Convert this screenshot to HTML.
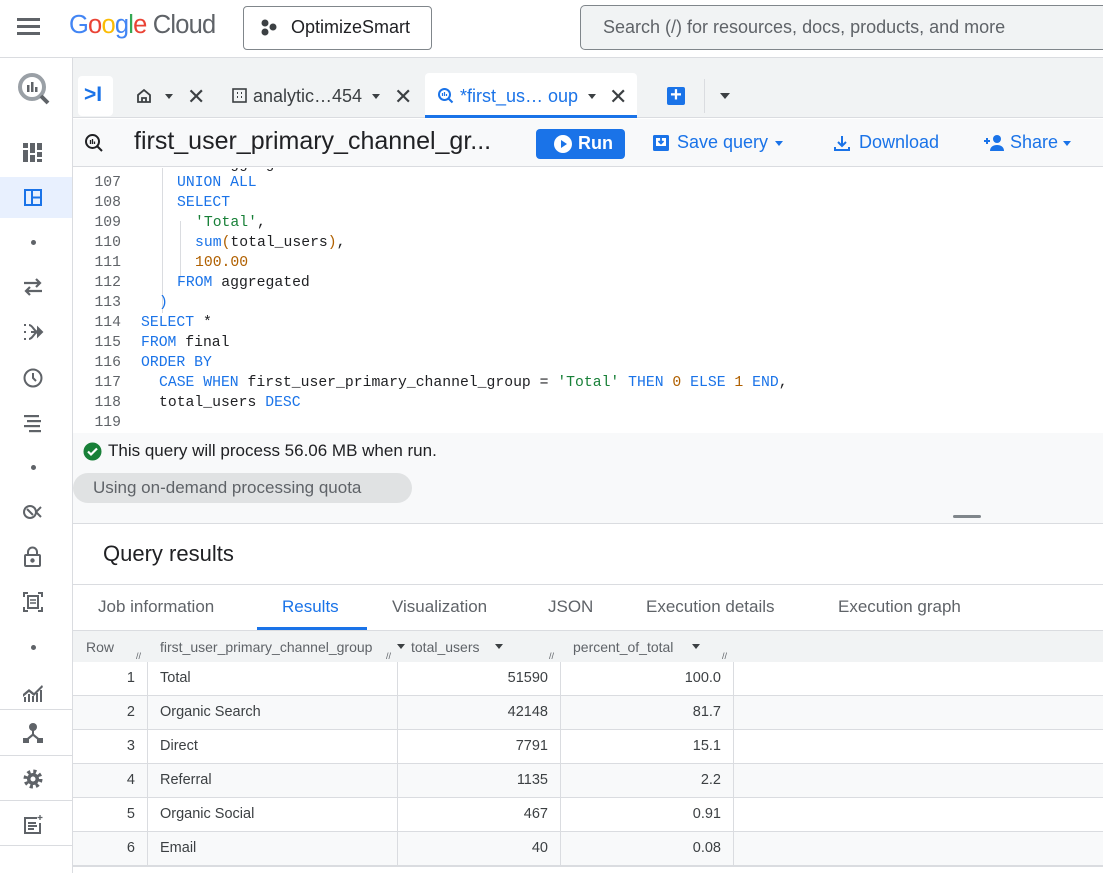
<!DOCTYPE html>
<html><head><meta charset="utf-8"><style>
*{margin:0;padding:0;box-sizing:border-box}
body{width:1103px;height:873px;overflow:hidden;background:#fff;font-family:"Liberation Sans",Arial,sans-serif;color:#202124;position:relative}
.a{position:absolute}
.l{position:absolute;height:20px;line-height:20px;font-family:"Liberation Mono",monospace;font-size:14.75px;white-space:pre;color:#202124}
.n{position:absolute;left:73px;width:48px;text-align:right;height:20px;line-height:20px;font-family:"Liberation Mono",monospace;font-size:14.75px;color:#5f6368}
.kw{color:#1a73e8}.st{color:#188038}.nu{color:#b06000}
.tab{position:absolute;top:597px;font-size:17px;color:#5f6368}
.row{position:absolute;left:73px;width:1030px;height:34px;border-bottom:1px solid #dadce0;font-size:14.5px;color:#3c4043}
.row div{position:absolute;top:0;height:34px;line-height:33px;border-right:1px solid #dadce0}
.sb svg{position:absolute;left:22px}
</style></head><body>

<!-- top bar -->
<div class="a" style="left:0;top:0;width:1103px;height:58px;border-bottom:1px solid #dadce0;background:#fff"></div>
<div class="a" style="left:17px;top:18px;width:23px;height:3px;background:#5f6368;box-shadow:0 7px 0 #5f6368,0 14px 0 #5f6368"></div>
<div class="a" style="left:69px;top:11px;font-size:25.5px;letter-spacing:-0.8px"><span style="color:#4285f4">G</span><span style="color:#ea4335">o</span><span style="color:#fbbc04">o</span><span style="color:#4285f4">g</span><span style="color:#34a853">l</span><span style="color:#ea4335">e</span><span style="color:#5f6368"> Cloud</span></div>
<div class="a" style="left:243px;top:6px;width:189px;height:44px;border:1px solid #80868b;border-radius:4px"></div>
<svg class="a" style="left:259px;top:18px" width="20" height="20"><circle cx="6" cy="5" r="3.5" fill="#3c4043"/><circle cx="14" cy="9" r="3.5" fill="#3c4043"/><circle cx="6" cy="14" r="3.5" fill="#3c4043"/></svg>
<div class="a" style="left:291px;top:17px;font-size:18px;color:#202124">OptimizeSmart</div>
<div class="a" style="left:580px;top:5px;width:540px;height:45px;border:1px solid #80868b;border-radius:5px;background:#f1f3f4"></div>
<div class="a" style="left:603px;top:17px;font-size:18px;color:#5f6368">Search (/) for resources, docs, products, and more</div>

<!-- sidebar -->
<div class="a sb" style="left:0;top:58px;width:73px;height:815px;border-right:1px solid #dadce0;background:#fff">
<svg style="left:15px;top:12px" width="40" height="40"><circle cx="17" cy="17" r="12" fill="none" stroke="#9aa0a6" stroke-width="4"/><line x1="26" y1="26" x2="33" y2="33" stroke="#5f6368" stroke-width="4"/><rect x="12" y="15" width="2.5" height="7" fill="#5f6368"/><rect x="16" y="12" width="2.5" height="10" fill="#5f6368"/><rect x="20" y="17" width="2.5" height="5" fill="#5f6368"/></svg>
<svg style="top:84px" width="22" height="22" fill="#5f6368"><rect x="1" y="1" width="5" height="5"/><rect x="8" y="1" width="5" height="10"/><rect x="15" y="1" width="5" height="7"/><rect x="1" y="8" width="5" height="12"/><rect x="8" y="13" width="5" height="7"/><rect x="15" y="10" width="5" height="5"/><rect x="15" y="17" width="5" height="3"/></svg>
<div class="a" style="left:0;top:119px;width:72px;height:41px;background:#e8f0fe"></div>
<svg style="left:24px;top:131px" width="18" height="18"><rect x="1" y="1" width="16" height="15" fill="none" stroke="#1a73e8" stroke-width="2"/><line x1="8" y1="1" x2="8" y2="16" stroke="#1a73e8" stroke-width="2"/><line x1="8" y1="8.5" x2="17" y2="8.5" stroke="#1a73e8" stroke-width="2"/></svg>
<div class="a" style="left:31px;top:182px;width:5px;height:5px;border-radius:50%;background:#5f6368"></div>
<svg style="top:219px" width="22" height="20" fill="none" stroke="#5f6368" stroke-width="2.2"><path d="M2 6H18M14 2l4 4-4 4M20 14H4M8 10l-4 4 4 4"/></svg>
<svg style="top:264px" width="22" height="20" fill="none" stroke="#5f6368" stroke-width="2"><path d="M2 3h2M2 10h2M2 17h2M7 3c4 0 5 7 9 7M7 17c4 0 5-7 9-7M9 10h8"/><path d="M16 6l4 4-4 4z" fill="#5f6368"/></svg>
<svg style="top:309px" width="22" height="22" fill="none" stroke="#5f6368" stroke-width="2"><circle cx="11" cy="11" r="8.5"/><path d="M11 6v5l3 3"/></svg>
<svg style="top:355px" width="22" height="20" fill="#5f6368"><rect x="2" y="2" width="15" height="2.2"/><rect x="5" y="7" width="14" height="2.2"/><rect x="2" y="12" width="16" height="2.2"/><rect x="7" y="17" width="12" height="2.2"/></svg>
<div class="a" style="left:31px;top:407px;width:5px;height:5px;border-radius:50%;background:#5f6368"></div>
<svg style="top:444px" width="22" height="20" fill="none" stroke="#5f6368" stroke-width="2"><circle cx="8" cy="10" r="6"/><path d="M5 7l6 6M14 10l5-5M14 10l5 5"/></svg>
<svg style="top:488px" width="22" height="22" fill="none" stroke="#5f6368" stroke-width="2"><rect x="3" y="9" width="15" height="11" rx="1"/><path d="M6 9V6a4.5 4.5 0 0 1 9 0v3"/><circle cx="10.5" cy="14.5" r="1.2" fill="#5f6368"/></svg>
<svg style="top:533px" width="22" height="22" fill="none" stroke="#5f6368" stroke-width="2"><path d="M2 6V2h4M16 2h4v4M20 16v4h-4M6 20H2v-4"/><rect x="6" y="5" width="10" height="12"/><path d="M8 9h6M8 12h6" stroke-width="1.5"/></svg>
<div class="a" style="left:31px;top:587px;width:5px;height:5px;border-radius:50%;background:#5f6368"></div>
<svg style="top:624px" width="22" height="20" fill="#5f6368"><path d="M1 12l6-5 5 4 8-8 1 2-9 9-5-4-6 5z"/><rect x="2" y="15" width="2" height="5"/><rect x="6" y="12" width="2" height="8"/><rect x="10" y="14" width="2" height="6"/><rect x="14" y="11" width="2" height="9"/><rect x="18" y="8" width="2" height="12"/></svg>
<div class="a" style="left:0;top:651px;width:72px;height:1px;background:#dadce0"></div>
<svg style="top:664px" width="22" height="22" fill="#5f6368"><circle cx="11" cy="5" r="4"/><path d="M10 8h2v4l6 5-1.5 1.5L11 14l-5.5 4.5L4 17l6-5z"/><rect x="1" y="16" width="6" height="5"/><rect x="15" y="16" width="6" height="5"/></svg>
<div class="a" style="left:0;top:697px;width:72px;height:1px;background:#dadce0"></div>
<svg style="top:710px" width="22" height="22"><circle cx="11" cy="11" r="7.5" fill="none" stroke="#5f6368" stroke-width="4" stroke-dasharray="3 2.9"/><circle cx="11" cy="11" r="6" fill="#5f6368"/><circle cx="11" cy="11" r="2.5" fill="#fff"/></svg>
<div class="a" style="left:0;top:742px;width:72px;height:1px;background:#dadce0"></div>
<svg style="top:756px" width="22" height="22" fill="none" stroke="#5f6368" stroke-width="2"><path d="M15 4H3v15h15V9"/><path d="M6 9h8M6 12h9M6 15h6"/><path d="M18 1v5M15.5 3.5h5" stroke-width="1.3"/></svg>
<div class="a" style="left:0;top:787px;width:72px;height:1px;background:#dadce0"></div>
</div>

<!-- tab bar -->
<div class="a" style="left:73px;top:58px;width:1030px;height:60px;background:#f1f3f4;border-bottom:1px solid #dadce0"></div>
<div class="a" style="left:78px;top:76px;width:35px;height:40px;background:#fff;border-radius:4px"></div>
<div class="a" style="left:84px;top:83px;font-size:21px;color:#1a73e8;font-weight:bold">&gt;I</div>
<svg class="a" style="left:136px;top:88px" width="16" height="16" fill="none" stroke="#3c4043" stroke-width="1.8"><path d="M2 7l6-5 6 5v7H2z"/><path d="M6 14v-4h4v4"/></svg>
<div class="a" style="left:165px;top:94px;border:4.5px solid transparent;border-top:5px solid #3c4043"></div>
<div class="a" style="left:187px;top:84px;font-size:22px;color:#3c4043">✕</div>
<svg class="a" style="left:232px;top:88px" width="15" height="15" fill="none" stroke="#3c4043" stroke-width="1.6"><rect x="1" y="1" width="13" height="13"/><path d="M5 5h1M9 5h1M5 9h1M9 9h1" stroke-width="2"/></svg>
<div class="a" style="left:253px;top:86px;font-size:18px;color:#3c4043">analytic…454</div>
<div class="a" style="left:372px;top:94px;border:4.5px solid transparent;border-top:5px solid #3c4043"></div>
<div class="a" style="left:394px;top:84px;font-size:22px;color:#3c4043">✕</div>
<div class="a" style="left:425px;top:73px;width:212px;height:45px;background:#fff;border-radius:4px 4px 0 0;border-bottom:3px solid #1a73e8"></div>
<svg class="a" style="left:437px;top:87px" width="18" height="18" fill="none" stroke="#1a73e8" stroke-width="2"><circle cx="7.5" cy="7.5" r="5.5"/><path d="M11.5 11.5l4 4"/><path d="M5.5 6v3M7.5 5v4M9.5 7v2" stroke-width="1.2"/></svg>
<div class="a" style="left:460px;top:86px;font-size:18px;color:#1a73e8">*first_us… oup</div>
<div class="a" style="left:588px;top:94px;border:4.5px solid transparent;border-top:5px solid #3c4043"></div>
<div class="a" style="left:609px;top:84px;font-size:22px;color:#3c4043">✕</div>
<div class="a" style="left:667px;top:87px;width:18px;height:18px;background:#1a73e8;border-radius:2px;color:#fff;font-size:20px;line-height:17px;text-align:center;font-weight:bold">+</div>
<div class="a" style="left:704px;top:79px;width:1px;height:34px;background:#dadce0"></div>
<div class="a" style="left:720px;top:93px;border:5px solid transparent;border-top:6px solid #3c4043"></div>

<!-- toolbar -->
<div class="a" style="left:73px;top:119px;width:1030px;height:48px;background:#f8f9fa;border-bottom:1px solid #dadce0"></div>
<svg class="a" style="left:84px;top:133px" width="20" height="20" fill="none" stroke="#202124" stroke-width="2"><circle cx="8.5" cy="8.5" r="6.5"/><path d="M13 13l5 5"/><path d="M6.5 7v4M8.5 6v5M10.5 8.5v2.5" stroke-width="1.3"/></svg>
<div class="a" style="left:134px;top:127px;font-size:25px;color:#202124">first_user_primary_channel_gr...</div>
<div class="a" style="left:536px;top:129px;width:89px;height:30px;background:#1a73e8;border-radius:4px"></div>
<svg class="a" style="left:553px;top:134px" width="20" height="20"><circle cx="10" cy="10" r="9" fill="#fff"/><path d="M8 6l6 4-6 4z" fill="#1a73e8"/></svg>
<div class="a" style="left:578px;top:133px;font-size:18px;color:#fff;font-weight:bold">Run</div>
<svg class="a" style="left:652px;top:134px" width="18" height="18"><rect x="1" y="1" width="16" height="16" rx="1.5" fill="#1a73e8"/><rect x="4" y="4" width="10" height="8" fill="#fff"/><path d="M9 4v5M6.5 7l2.5 2.5L11.5 7" stroke="#1a73e8" stroke-width="1.8" fill="none"/></svg>
<div class="a" style="left:677px;top:132px;font-size:18px;color:#1a73e8">Save query</div>
<div class="a" style="left:775px;top:141px;border:4.5px solid transparent;border-top:5px solid #1a73e8"></div>
<svg class="a" style="left:833px;top:134px" width="18" height="18" fill="none" stroke="#1a73e8" stroke-width="2"><path d="M9 2v10M5 8l4 4 4-4M2 13v3h14v-3"/></svg>
<div class="a" style="left:859px;top:132px;font-size:18px;color:#1a73e8">Download</div>
<svg class="a" style="left:983px;top:134px" width="22" height="18" fill="#1a73e8"><path d="M1 7h6M4 4v6" stroke="#1a73e8" stroke-width="2"/><circle cx="14" cy="5" r="4"/><path d="M7 17c0-4 3-6 7-6s7 2 7 6z"/></svg>
<div class="a" style="left:1010px;top:132px;font-size:18px;color:#1a73e8">Share</div>
<div class="a" style="left:1063px;top:141px;border:4.5px solid transparent;border-top:5px solid #1a73e8"></div>

<!-- editor -->
<div class="a" style="left:73px;top:168px;width:1030px;height:265px;background:#fff;overflow:hidden">
  <div class="a" style="left:89px;top:0;width:1px;height:145px;background:#dadce0"></div>
  <div class="a" style="left:107px;top:53px;width:1px;height:60px;background:#dadce0"></div>
  <div class="l kw" style="left:104px;top:-13px">FROM <span style="color:#202124">aggregated</span></div>
  <div class="n" style="left:0;top:-13px">106</div>
</div>
<div class="n" style="top:173px">107</div><div class="l kw" style="left:177px;top:173px">UNION ALL</div>
<div class="n" style="top:193px">108</div><div class="l kw" style="left:177px;top:193px">SELECT</div>
<div class="n" style="top:213px">109</div><div class="l" style="left:195px;top:213px"><span class="st">'Total'</span>,</div>
<div class="n" style="top:233px">110</div><div class="l" style="left:195px;top:233px"><span class="kw">sum</span><span class="nu">(</span>total_users<span class="nu">)</span>,</div>
<div class="n" style="top:253px">111</div><div class="l nu" style="left:195px;top:253px">100.00</div>
<div class="n" style="top:273px">112</div><div class="l" style="left:177px;top:273px"><span class="kw">FROM</span> aggregated</div>
<div class="n" style="top:293px">113</div><div class="l kw" style="left:159px;top:293px">)</div>
<div class="n" style="top:313px">114</div><div class="l" style="left:141px;top:313px"><span class="kw">SELECT</span> *</div>
<div class="n" style="top:333px">115</div><div class="l" style="left:141px;top:333px"><span class="kw">FROM</span> final</div>
<div class="n" style="top:353px">116</div><div class="l kw" style="left:141px;top:353px">ORDER BY</div>
<div class="n" style="top:373px">117</div><div class="l" style="left:159px;top:373px"><span class="kw">CASE WHEN</span> first_user_primary_channel_group = <span class="st">'Total'</span> <span class="kw">THEN</span> <span class="nu">0</span> <span class="kw">ELSE</span> <span class="nu">1</span> <span class="kw">END</span>,</div>
<div class="n" style="top:393px">118</div><div class="l" style="left:159px;top:393px">total_users <span class="kw">DESC</span></div>
<div class="n" style="top:413px">119</div>

<!-- status area -->
<div class="a" style="left:73px;top:433px;width:1030px;height:90px;background:#f8f9fa"></div>
<svg class="a" style="left:83px;top:442px" width="19" height="19"><circle cx="9.5" cy="9.5" r="9" fill="#188038"/><path d="M5 9.5l3 3 6-6" stroke="#fff" stroke-width="2.2" fill="none"/></svg>
<div class="a" style="left:108px;top:441px;font-size:17px;color:#202124">This query will process 56.06 MB when run.</div>
<div class="a" style="left:73px;top:473px;width:339px;height:30px;background:#e0e2e3;border-radius:15px"></div>
<div class="a" style="left:93px;top:478px;font-size:17px;color:#5f6368">Using on-demand processing quota</div>
<div class="a" style="left:953px;top:515px;width:28px;height:3px;background:#80868b;border-radius:2px"></div>
<div class="a" style="left:73px;top:523px;width:1030px;height:1px;background:#dadce0"></div>

<!-- results -->
<div class="a" style="left:103px;top:541px;font-size:22px;color:#202124">Query results</div>
<div class="a" style="left:73px;top:584px;width:1030px;height:1px;background:#dadce0"></div>
<div class="tab" style="left:98px">Job information</div>
<div class="tab" style="left:282px;color:#1a73e8">Results</div>
<div class="a" style="left:257px;top:627px;width:110px;height:3px;background:#1a73e8"></div>
<div class="tab" style="left:392px">Visualization</div>
<div class="tab" style="left:548px">JSON</div>
<div class="tab" style="left:646px">Execution details</div>
<div class="tab" style="left:838px">Execution graph</div>
<div class="a" style="left:73px;top:630px;width:1030px;height:1px;background:#dadce0"></div>

<!-- table header -->
<div class="a" style="left:73px;top:631px;width:1030px;height:31px;background:#f1f3f4;font-size:14px;color:#5f6368">
<div class="a" style="left:13px;top:8px">Row</div>
<div class="a" style="left:87px;top:8px">first_user_primary_channel_group</div>
<div class="a" style="left:324px;top:13px;border:4px solid transparent;border-top:5px solid #3c4043"></div>
<div class="a" style="left:338px;top:8px">total_users</div>
<div class="a" style="left:422px;top:13px;border:4px solid transparent;border-top:5px solid #3c4043"></div>
<div class="a" style="left:500px;top:8px">percent_of_total</div>
<div class="a" style="left:619px;top:13px;border:4px solid transparent;border-top:5px solid #3c4043"></div>
<div class="a" style="left:63px;top:20px;font-size:9px;color:#5f6368">//</div>
<div class="a" style="left:313px;top:20px;font-size:9px">//</div>
<div class="a" style="left:476px;top:20px;font-size:9px">//</div>
<div class="a" style="left:649px;top:20px;font-size:9px">//</div>
</div>

<div class="row" style="top:662px;background:#fff"><div style="left:0;width:75px;text-align:right;padding-right:12px">1</div><div style="left:75px;width:250px;padding-left:12px">Total</div><div style="left:325px;width:163px;text-align:right;padding-right:12px">51590</div><div style="left:488px;width:173px;text-align:right;padding-right:12px">100.0</div></div>
<div class="row" style="top:696px;background:#f8f9fa"><div style="left:0;width:75px;text-align:right;padding-right:12px">2</div><div style="left:75px;width:250px;padding-left:12px">Organic Search</div><div style="left:325px;width:163px;text-align:right;padding-right:12px">42148</div><div style="left:488px;width:173px;text-align:right;padding-right:12px">81.7</div></div>
<div class="row" style="top:730px;background:#fff"><div style="left:0;width:75px;text-align:right;padding-right:12px">3</div><div style="left:75px;width:250px;padding-left:12px">Direct</div><div style="left:325px;width:163px;text-align:right;padding-right:12px">7791</div><div style="left:488px;width:173px;text-align:right;padding-right:12px">15.1</div></div>
<div class="row" style="top:764px;background:#f8f9fa"><div style="left:0;width:75px;text-align:right;padding-right:12px">4</div><div style="left:75px;width:250px;padding-left:12px">Referral</div><div style="left:325px;width:163px;text-align:right;padding-right:12px">1135</div><div style="left:488px;width:173px;text-align:right;padding-right:12px">2.2</div></div>
<div class="row" style="top:798px;background:#fff"><div style="left:0;width:75px;text-align:right;padding-right:12px">5</div><div style="left:75px;width:250px;padding-left:12px">Organic Social</div><div style="left:325px;width:163px;text-align:right;padding-right:12px">467</div><div style="left:488px;width:173px;text-align:right;padding-right:12px">0.91</div></div>
<div class="row" style="top:832px;background:#f8f9fa"><div style="left:0;width:75px;text-align:right;padding-right:12px">6</div><div style="left:75px;width:250px;padding-left:12px">Email</div><div style="left:325px;width:163px;text-align:right;padding-right:12px">40</div><div style="left:488px;width:173px;text-align:right;padding-right:12px">0.08</div></div>
<div class="a" style="left:73px;top:866px;width:1030px;height:7px;background:#fff;border-top:1px solid #dadce0"></div>
</body></html>
